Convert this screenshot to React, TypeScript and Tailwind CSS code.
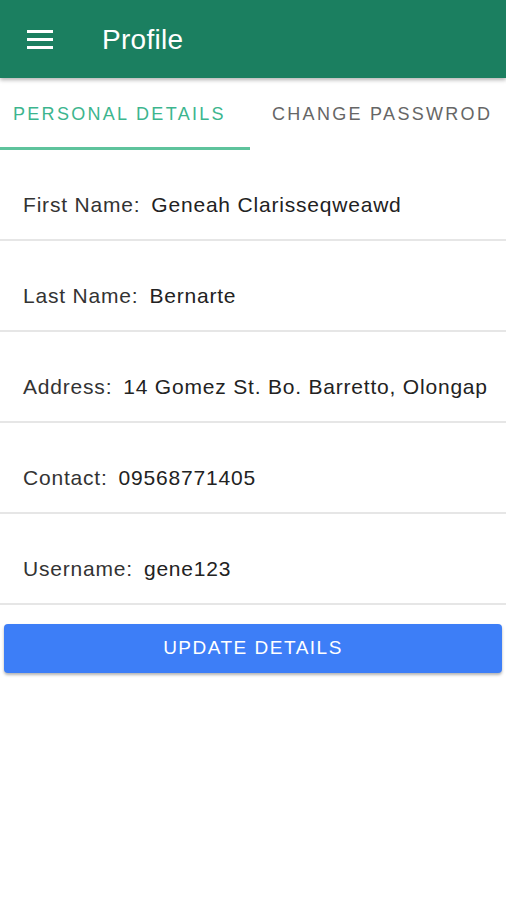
import React, { useState } from "react";

const fields = [
  { label: "First Name:", value: "Geneah Clarisseqweawd" },
  { label: "Last Name:", value: "Bernarte" },
  { label: "Address:", value: "14 Gomez St. Bo. Barretto, Olongap" },
  { label: "Contact:", value: "09568771405" },
  { label: "Username:", value: "gene123" },
];

const App = () => {
  const [tab, setTab] = useState(0);

  return (
    <div className="min-h-[900px] bg-white font-[family-name:'Liberation_Sans',Arial,sans-serif] overflow-hidden">
      <header className="h-[78px] bg-[#1b7f60] flex items-center relative z-10 shadow-[0_2px_4px_rgba(0,0,0,0.3)]">
        <button className="ml-[27px] w-[26px] flex flex-col gap-[5px]">
          <span className="block h-[3px] bg-white" />
          <span className="block h-[3px] bg-white" />
          <span className="block h-[3px] bg-white" />
        </button>
        <h1 className="ml-[49px] pt-[2px] text-white text-[28px] tracking-[0.3px] leading-none">Profile</h1>
      </header>

      <div className="flex h-[72px]">
        <button
          onClick={() => setTab(0)}
          className={`w-[250px] shrink-0 flex items-center pl-[13px] text-[18px] tracking-[2.3px] border-b-[3px] ${
            tab === 0 ? "text-[#3cb58e] border-[#5ec39c]" : "text-[#666] border-transparent"
          }`}
        >
          <span className="pt-[3px] whitespace-nowrap">PERSONAL DETAILS</span>
        </button>
        <button
          onClick={() => setTab(1)}
          className={`w-[264px] shrink-0 flex items-center pl-[22px] text-[18px] tracking-[2.3px] border-b-[3px] ${
            tab === 1 ? "text-[#3cb58e] border-[#5ec39c]" : "text-[#666] border-transparent"
          }`}
        >
          <span className="pt-[3px] whitespace-nowrap">CHANGE PASSWROD</span>
        </button>
      </div>

      <div>
        {fields.map((f) => (
          <div
            key={f.label}
            className="flex gap-[11px] pl-[23px] pt-[42px] pb-[21px] border-b-2 border-[#e6e6e6] text-[21px] tracking-[0.8px] leading-[26px] whitespace-nowrap overflow-hidden"
          >
            <span className="text-[#333]">{f.label}</span>
            <span className="text-[#222]">{f.value}</span>
          </div>
        ))}
      </div>

      <div className="px-[4px] mt-[19px]">
        <button className="w-full h-[49px] rounded-[4px] bg-[#3d7ef7] text-white text-[19px] tracking-[1.5px] shadow-[0_2px_3px_rgba(0,0,0,0.3)]">
          UPDATE DETAILS
        </button>
      </div>
    </div>
  );
};

export default App;
